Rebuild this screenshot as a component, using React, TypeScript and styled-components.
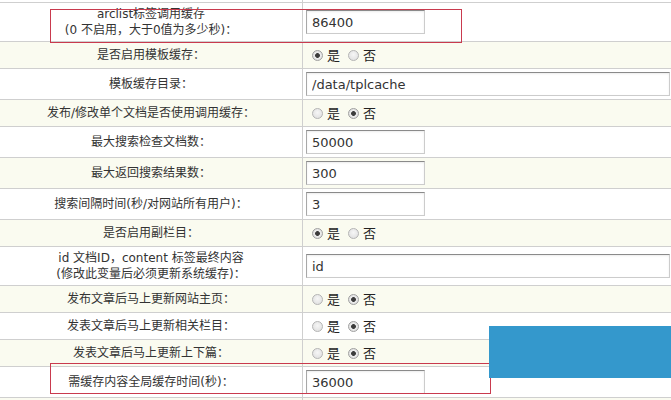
import { createGlobalStyle, styled } from "styled-components";

const GlobalStyle = createGlobalStyle`
  html, body {
    margin: 0;
    padding: 0;
    background: #ffffff;
  }

  body {
    font-family: "DejaVu Sans", "Noto Sans CJK SC", sans-serif;
    font-size: 12px;
    color: #333333;
  }
`;

type Setting =
  | { label: string[]; kind: "text"; value: string; wide?: boolean }
  | { label: string[]; kind: "radio"; on: boolean };

// cache settings, in the order they appear on the form
const settings: Setting[] = [
  {
    label: ["arclist标签调用缓存", "(0 不启用，大于0值为多少秒)："],
    kind: "text",
    value: "86400",
  },
  { label: ["是否启用模板缓存："], kind: "radio", on: true },
  { label: ["模板缓存目录："], kind: "text", value: "/data/tplcache", wide: true },
  { label: ["发布/修改单个文档是否使用调用缓存："], kind: "radio", on: false },
  { label: ["最大搜索检查文档数："], kind: "text", value: "50000" },
  { label: ["最大返回搜索结果数："], kind: "text", value: "300" },
  { label: ["搜索间隔时间(秒/对网站所有用户)："], kind: "text", value: "3" },
  { label: ["是否启用副栏目："], kind: "radio", on: true },
  {
    label: ["id 文档ID，content 标签最终内容", "(修改此变量后必须更新系统缓存)："],
    kind: "text",
    value: "id",
    wide: true,
  },
  { label: ["发布文章后马上更新网站主页："], kind: "radio", on: false },
  { label: ["发表文章后马上更新相关栏目："], kind: "radio", on: false },
  { label: ["发表文章后马上更新上下篇："], kind: "radio", on: false },
  { label: ["需缓存内容全局缓存时间(秒)："], kind: "text", value: "36000" },
];

export default function App() {
  return (
    <>
      <GlobalStyle />
      <Page>
        <Table>
          <Row $alt={false}>
            <Label $stub />
            <Value $stub />
          </Row>
          {settings.map((s, i) => (
            <Row key={i} $alt={i % 2 === 1}>
              <Label>
                {s.label.map((line) => (
                  <span key={line}>{line}</span>
                ))}
              </Label>
              <Value>
                {s.kind === "text" ? (
                  <TextInput defaultValue={s.value} $wide={!!s.wide} />
                ) : (
                  <>
                    <RadioLabel>
                      <Radio type="radio" name={`opt${i}`} defaultChecked={s.on} />
                      是
                    </RadioLabel>
                    <RadioLabel>
                      <Radio type="radio" name={`opt${i}`} defaultChecked={!s.on} />
                      否
                    </RadioLabel>
                  </>
                )}
              </Value>
            </Row>
          ))}
          <Row $alt>
            <Label />
            <Value />
          </Row>
        </Table>

        <Highlight $top={9} $left={50} $width={412} $height={34} />
        <Highlight $top={363} $left={50} $width={441} $height={31} />
        <Promo />
      </Page>
    </>
  );
}

const Page = styled.div`
  position: relative;
  width: 671px;
  height: 400px;
  overflow: hidden;
`;

const Table = styled.div`
  display: flex;
  flex-direction: column;
  width: 700px;
`;

const Row = styled.div<{ $alt: boolean }>`
  display: grid;
  grid-template-columns: 303px 1fr;
  border-bottom: 1px solid #cfcfcf;
  background: ${({ $alt }) => ($alt ? "#fafbf0" : "#ffffff")};
`;

const Label = styled.div<{ $stub?: boolean }>`
  box-sizing: border-box;
  display: flex;
  flex-direction: column;
  align-items: center;
  justify-content: center;
  padding: ${({ $stub }) => ($stub ? "0" : "3px 4px")};
  height: ${({ $stub }) => ($stub ? "2px" : "auto")};
  border-right: 1px solid #cfcfcf;
  font-family: "DejaVu Sans", "Noto Sans CJK SC", sans-serif;
  font-size: 12px;
  line-height: 16px;
  color: #333333;
  text-align: center;
  white-space: nowrap;
`;

const Value = styled.div<{ $stub?: boolean }>`
  box-sizing: border-box;
  display: flex;
  align-items: center;
  min-height: ${({ $stub }) => ($stub ? "2px" : "26px")};
  padding: ${({ $stub }) => ($stub ? "0" : "3px 3px")};
`;

const TextInput = styled.input<{ $wide: boolean }>`
  box-sizing: border-box;
  width: ${({ $wide }) => ($wide ? "364px" : "119px")};
  height: 24px;
  margin: 0;
  padding: 0 5px;
  border: 1px solid #cccccc;
  border-top-color: #8a8a8a;
  border-left-color: #a8a8a8;
  box-shadow: inset 0 1px 2px rgba(0, 0, 0, 0.08);
  background: #ffffff;
  font-family: "DejaVu Sans", sans-serif;
  font-size: 13px;
  color: #333333;
  outline: none;
`;

const RadioLabel = styled.label`
  display: inline-flex;
  align-items: center;
  font-family: "Noto Sans CJK SC", sans-serif;
  font-size: 13px;
  line-height: 18px;
  color: #222222;
  margin-right: 2px;
`;

const Radio = styled.input`
  appearance: none;
  box-sizing: border-box;
  width: 11px;
  height: 11px;
  margin: 0 4px 0 6px;
  border-radius: 50%;
  border: 1px solid #b4b4b4;
  background: radial-gradient(circle at 50% 40%, #f6f6f6 0, #dcdcdc 100%);

  &:checked {
    border-color: #a0a0a0;
    background: radial-gradient(
      circle,
      #3c3c3c 0,
      #3c3c3c 2px,
      #ececec 2.8px,
      #d6d6d6 100%
    );
  }
`;

const Highlight = styled.div<{
  $top: number;
  $left: number;
  $width: number;
  $height: number;
}>`
  position: absolute;
  top: ${({ $top }) => $top}px;
  left: ${({ $left }) => $left}px;
  width: ${({ $width }) => $width}px;
  height: ${({ $height }) => $height}px;
  box-sizing: border-box;
  border: 1px solid #c93a4e;
  pointer-events: none;
`;

const Promo = styled.div`
  position: absolute;
  top: 326px;
  left: 489px;
  width: 182px;
  height: 52px;
  background: #3498cc;
`;
